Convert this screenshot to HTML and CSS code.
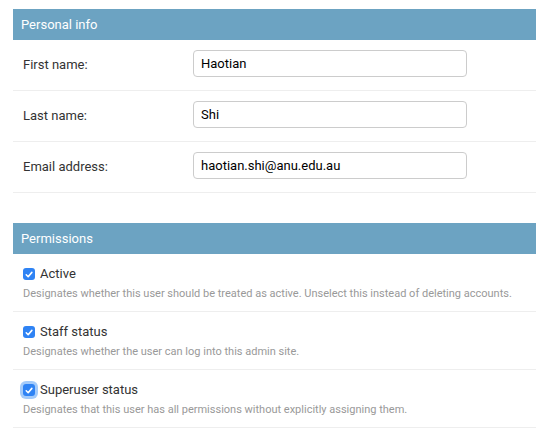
FILE: index.html
```html
<!DOCTYPE html>
<html>
<head>
<meta charset="utf-8">
<link rel="stylesheet" href="styles.css">
</head>
<body>
<div class="page">
  <fieldset class="module">
    <h2 class="caption">Personal info</h2>
    <div class="form-row">
      <label class="field-label">First name:</label>
      <div class="input">Haotian</div>
    </div>
    <div class="form-row">
      <label class="field-label">Last name:</label>
      <div class="input">Shi</div>
    </div>
    <div class="form-row">
      <label class="field-label">Email address:</label>
      <div class="input">haotian.shi@anu.edu.au</div>
    </div>
  </fieldset>
  <fieldset class="module">
    <h2 class="caption">Permissions</h2>
    <div class="check-row">
      <div class="check-line">
        <span class="checkbox"><svg viewBox="0 0 13 13" width="13" height="13"><path d="M3.5 6.8 L5.6 8.9 L9.6 4.2" fill="none" stroke="#fff" stroke-width="1.7" stroke-linecap="round" stroke-linejoin="round"/></svg></span>
        <span class="check-label">Active</span>
      </div>
      <p class="help">Designates whether this user should be treated as active. Unselect this instead of deleting accounts.</p>
    </div>
    <div class="check-row">
      <div class="check-line">
        <span class="checkbox"><svg viewBox="0 0 13 13" width="13" height="13"><path d="M3.5 6.8 L5.6 8.9 L9.6 4.2" fill="none" stroke="#fff" stroke-width="1.7" stroke-linecap="round" stroke-linejoin="round"/></svg></span>
        <span class="check-label">Staff status</span>
      </div>
      <p class="help">Designates whether the user can log into this admin site.</p>
    </div>
    <div class="check-row">
      <div class="check-line">
        <span class="checkbox focused"><svg viewBox="0 0 13 13" width="13" height="13"><path d="M3.5 6.8 L5.6 8.9 L9.6 4.2" fill="none" stroke="#fff" stroke-width="1.7" stroke-linecap="round" stroke-linejoin="round"/></svg></span>
        <span class="check-label">Superuser status</span>
      </div>
      <p class="help">Designates that this user has all permissions without explicitly assigning them.</p>
    </div>
  </fieldset>
</div>
</body>
</html>
```
FILE: styles.css
```css
html, body {
  margin: 0;
  padding: 0;
  background: #fff;
}
body {
  font-family: Roboto, "Liberation Sans", Arial, sans-serif;
  color: #333;
}
.page {
  padding: 9px 0 0 13px;
}
.module {
  margin: 0 0 30px 0;
  padding: 0;
  border: 0;
  min-width: 0;
}
.module:last-child {
  margin-bottom: 0;
}
.caption {
  margin: 0;
  padding: 8px;
  height: 15px;
  font-size: 13px;
  line-height: 15px;
  font-weight: 400;
  color: #fff;
  background: #6ca3c2;
}
.form-row {
  display: flex;
  align-items: flex-start;
  padding: 10px;
  height: 30px;
  border-bottom: 1px solid #eee;
}
.field-label {
  width: 170px;
  flex: none;
  padding-top: 7px;
  font-size: 13px;
  line-height: 16px;
  color: #333;
}
.input {
  box-sizing: border-box;
  width: 274px;
  height: 27px;
  padding: 0 7px;
  border: 1px solid #ccc;
  border-radius: 4px;
  font-size: 13px;
  line-height: 25px;
  color: #000;
  background: #fff;
}
.check-row {
  padding: 10px;
  border-bottom: 1px solid #eee;
}
.check-line {
  display: flex;
  align-items: flex-start;
  height: 19px;
}
.checkbox {
  flex: none;
  width: 12px;
  height: 12px;
  margin-top: 4px;
  margin-right: 5px;
  border-radius: 3px;
  background: #2f83f4;
  display: flex;
  align-items: center;
  justify-content: center;
}
.checkbox svg {
  display: block;
}
.checkbox.focused {
  box-shadow: 0 0 0 3px rgba(90, 160, 245, 0.55);
}
.check-label {
  font-size: 13px;
  line-height: 19px;
  color: #333;
}
.help {
  margin: 3px 0 0 0;
  font-size: 11px;
  line-height: 15px;
  color: #999;
}
```
